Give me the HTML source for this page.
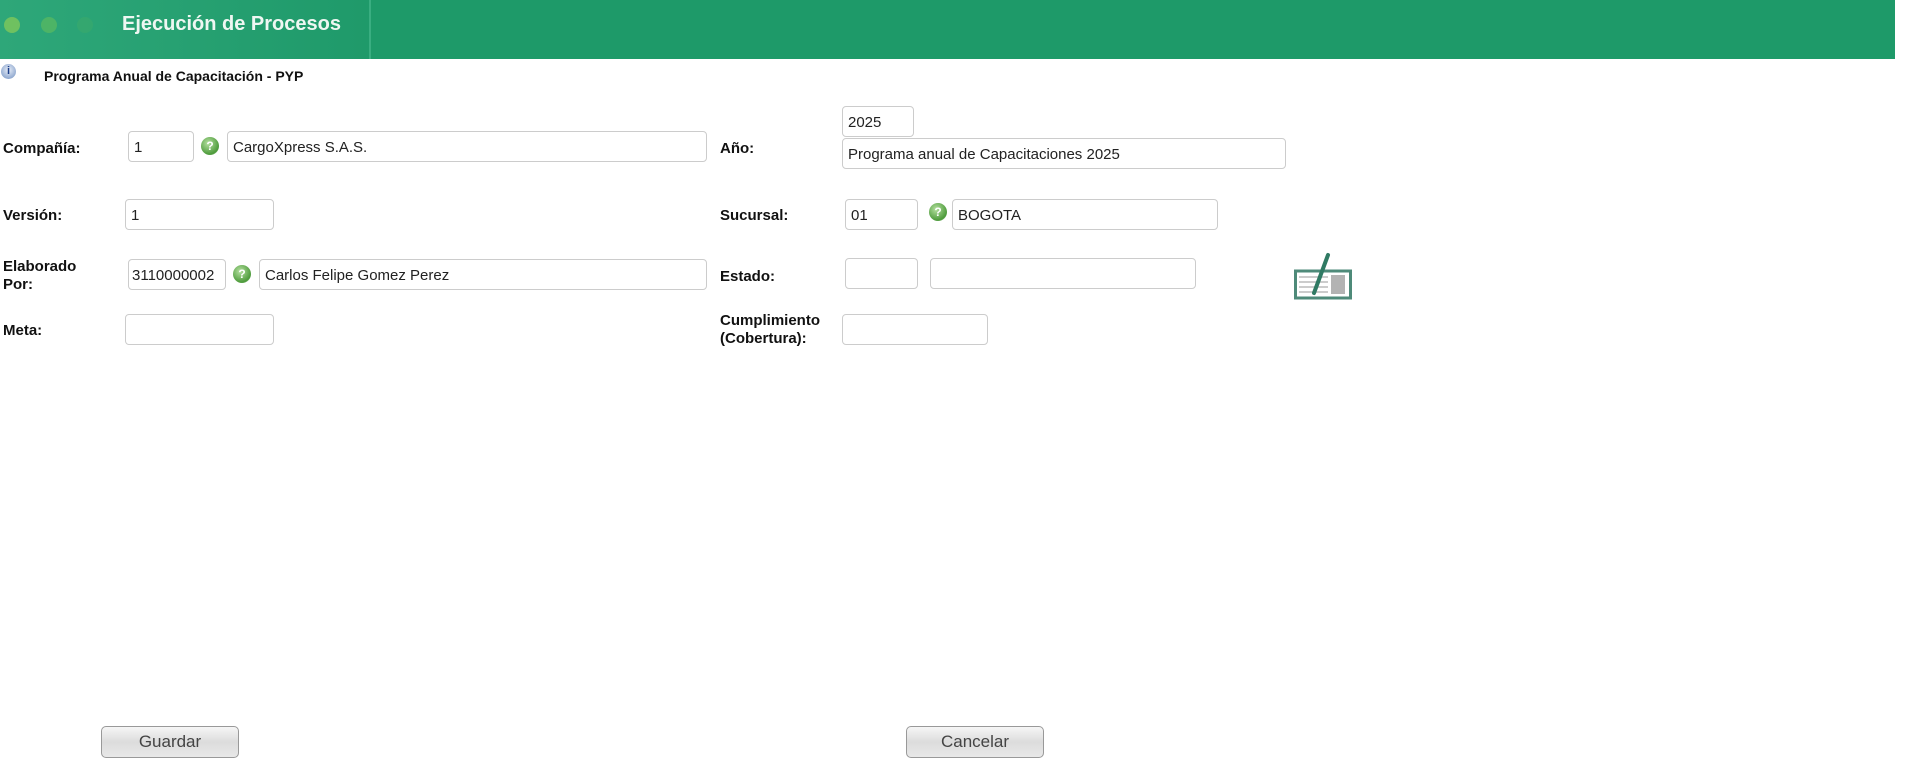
<!DOCTYPE html>
<html><head><meta charset="utf-8"><style>
*{box-sizing:border-box}
body{margin:0;width:1905px;height:781px;background:#fff;font-family:"Liberation Sans","DejaVu Sans",sans-serif;position:relative;overflow:hidden}
.hdr{position:absolute;left:0;top:0;width:1895px;height:59px;background:#1e9a69}
.hdr .l{position:absolute;left:0;top:0;width:370px;height:59px;background:linear-gradient(90deg,#2ea779,#1f9a6a)}
.hdr .sep{position:absolute;left:369px;top:0;width:2px;height:59px;background:#3aae81}
.dot{position:absolute;top:17px;width:16px;height:16px;border-radius:50%}
.ttl{position:absolute;left:122px;top:13px;color:#eef7f2;font-weight:bold;font-size:20px}
.lb{position:absolute;font-weight:bold;font-size:15px;color:#111;line-height:18px}
.in{position:absolute;border:1px solid #ccc;border-radius:4px;height:31px;font-size:15px;color:#222;padding:7px 0 0 5px;white-space:nowrap;overflow:hidden;background:#fff}
.q{position:absolute;width:18px;height:18px;border-radius:50%;background:radial-gradient(circle at 40% 35%,#b5e0a0,#4c9a3a 70%,#d9ecd3 100%);color:#fff;font-size:12px;font-weight:bold;text-align:center;line-height:18px}
.btn{position:absolute;width:138px;height:32px;border:1px solid #999;border-radius:5px;background:linear-gradient(#f6f6f6,#dcdcdc 50%,#e8e8e8);font-size:17px;color:#444;text-align:center;line-height:30px}
</style></head><body>
<div class="hdr"><div class="l"></div><div class="sep"></div>
<div class="dot" style="left:4px;background:#7fc85a;opacity:.8"></div>
<div class="dot" style="left:41px;background:#5bbb60;opacity:.7"></div>
<div class="dot" style="left:77px;background:#3aaa6a;opacity:.6"></div>
<div class="ttl">Ejecución de Procesos</div></div>
<div style="position:absolute;left:1px;top:64px;width:15px;height:15px;border-radius:50%;background:radial-gradient(circle at 50% 40%,#e8eef8,#6f8fc0);color:#1c3f8a;font-size:11px;font-weight:bold;text-align:center;line-height:15px">i</div>
<div class="lb" style="left:44px;top:67px;font-size:14px">Programa Anual de Capacitación - PYP</div>

<div class="lb" style="left:3px;top:140px">Compañía:</div>
<div class="in" style="left:128px;top:131px;width:66px">1</div>
<div class="q" style="left:201px;top:137px">?</div>
<div class="in" style="left:227px;top:131px;width:480px">CargoXpress S.A.S.</div>

<div class="lb" style="left:720px;top:140px">Año:</div>
<div class="in" style="left:842px;top:106px;width:72px">2025</div>
<div class="in" style="left:842px;top:138px;width:444px">Programa anual de Capacitaciones 2025</div>

<div class="lb" style="left:3px;top:207px">Versión:</div>
<div class="in" style="left:125px;top:199px;width:149px">1</div>

<div class="lb" style="left:720px;top:207px">Sucursal:</div>
<div class="in" style="left:845px;top:199px;width:73px">01</div>
<div class="q" style="left:929px;top:203px">?</div>
<div class="in" style="left:952px;top:199px;width:266px">BOGOTA</div>

<div class="lb" style="left:3px;top:258px">Elaborado<br>Por:</div>
<div class="in" style="left:128px;top:259px;width:98px;padding-left:3px">3110000002</div>
<div class="q" style="left:233px;top:265px">?</div>
<div class="in" style="left:259px;top:259px;width:448px">Carlos Felipe Gomez Perez</div>

<div class="lb" style="left:720px;top:268px">Estado:</div>
<div class="in" style="left:845px;top:258px;width:73px"></div>
<div class="in" style="left:930px;top:258px;width:266px"></div>

<svg style="position:absolute;left:1294px;top:252px" width="66" height="50" viewBox="0 0 66 50">
<rect x="1.5" y="19" width="55" height="27" fill="#fff" stroke="#4e8a79" stroke-width="3"/>
<g stroke="#ccc" stroke-width="2"><line x1="5" y1="25" x2="34" y2="25"/><line x1="5" y1="30" x2="34" y2="30"/><line x1="5" y1="35" x2="34" y2="35"/><line x1="5" y1="40" x2="34" y2="40"/></g>
<rect x="37" y="23" width="14" height="19" fill="#b3b3b3"/>
<line x1="20" y1="41" x2="34" y2="3" stroke="#2f7a63" stroke-width="4" stroke-linecap="round"/>
</svg>

<div class="lb" style="left:3px;top:322px">Meta:</div>
<div class="in" style="left:125px;top:314px;width:149px"></div>

<div class="lb" style="left:720px;top:312px">Cumplimiento<br>(Cobertura):</div>
<div class="in" style="left:842px;top:314px;width:146px"></div>

<div class="btn" style="left:101px;top:726px">Guardar</div>
<div class="btn" style="left:906px;top:726px">Cancelar</div>
</body></html>
